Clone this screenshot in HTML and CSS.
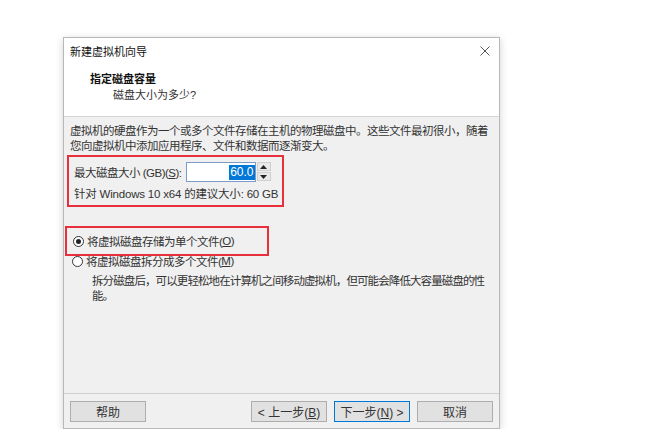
FILE: index.html
```html
<!DOCTYPE html>
<html lang="zh-CN">
<head>
  <meta charset="UTF-8">
  <title>新建虚拟机向导</title>
  <link rel="stylesheet" href="styles.css">
</head>
<body>
  <div class="dialog">
    <div class="header">
      <div class="titlebar">
        <span class="title">新建虚拟机向导</span>
        <svg class="close" width="10" height="10" viewBox="0 0 10 10">
          <path d="M0.5 0.5 L9.5 9.5 M9.5 0.5 L0.5 9.5" stroke="#555" stroke-width="1"/>
        </svg>
      </div>
      <div class="step-title">指定磁盘容量</div>
      <div class="step-sub">磁盘大小为多少?</div>
    </div>

    <div class="content">
      <p class="desc">虚拟机的硬盘作为一个或多个文件存储在主机的物理磁盘中。这些文件最初很小，随着<br>您向虚拟机中添加应用程序、文件和数据而逐渐变大。</p>

      <div class="mark size-box">
        <div class="size-row">
          <span>最大磁盘大小 (GB)(<u>S</u>):</span>
          <div class="spin">
            <div class="spin-input"><span class="sel">60.0</span></div>
            <div class="spin-btns">
              <div class="spin-btn">
                <svg width="7" height="4" viewBox="0 0 7 4"><path d="M0 4 L3.5 0 L7 4Z" fill="#222"/></svg>
              </div>
              <div class="spin-btn">
                <svg width="7" height="4" viewBox="0 0 7 4"><path d="M0 0 L3.5 4 L7 0Z" fill="#222"/></svg>
              </div>
            </div>
          </div>
        </div>
        <div class="hint">针对 Windows 10 x64 的建议大小: 60 GB</div>
      </div>

      <div class="mark radio-box">
        <label class="radio"><span class="dot checked"></span>将虚拟磁盘存储为单个文件(<u>O</u>)</label>
      </div>
      <label class="radio second"><span class="dot"></span>将虚拟磁盘拆分成多个文件(<u>M</u>)</label>
      <p class="note">拆分磁盘后，可以更轻松地在计算机之间移动虚拟机，但可能会降低大容量磁盘的性<br>能。</p>
    </div>

    <div class="footer">
      <button class="btn">帮助</button>
      <div class="nav">
        <button class="btn">&lt; 上一步(<u>B</u>)</button>
        <button class="btn primary">下一步(<u>N</u>) &gt;</button>
        <button class="btn">取消</button>
      </div>
    </div>
  </div>
</body>
</html>
```

FILE: styles.css
```css
body {
  margin: 0;
  background: #fff;
  font-family: "Liberation Sans", "Noto Sans CJK SC", sans-serif;
  font-size: 12px;
  color: #222;
}
.dialog {
  margin: 37px 0 0 63px;
  width: 435px;
  height: 390px;
  border: 1px solid #b8b8b8;
  background: #f0f0f0;
  box-shadow: 0 2px 8px rgba(0,0,0,0.18);
  display: flex;
  flex-direction: column;
}
.header {
  background: #fff;
  height: 78px;
  border-bottom: 1px solid #d6d6d6;
}
.titlebar {
  display: flex;
  justify-content: space-between;
  align-items: center;
  height: 26px;
  padding: 0 9px 0 6px;
}
.title {
  font-size: 11px;
  color: #111;
}
.step-title {
  margin: 7px 0 0 26px;
  font-weight: bold;
  font-size: 11px;
  line-height: 16px;
  color: #111;
}
.step-sub {
  margin-left: 49px;
  font-size: 11px;
  line-height: 16px;
  color: #333;
}
.content {
  flex: 1;
  padding: 7px 0 0 6px;
  white-space: nowrap;
  font-size: 11.5px;
  letter-spacing: -0.5px;
}
.desc {
  margin: 0;
  line-height: 15px;
  color: #333;
}
.mark {
  border: 2px solid #e8303c;
}
.size-box {
  width: 208px;
  height: 48px;
  margin: 1px 0 0 -3px;
  padding: 0 0 0 5px;
}
.size-row {
  display: flex;
  align-items: center;
  margin-top: 4px;
  height: 22px;
  color: #333;
}
.spin {
  display: flex;
  margin-left: 4px;
  letter-spacing: 0;
}
.spin-input {
  width: 68px;
  height: 18px;
  border: 1px solid #7a9cc6;
  background: #fff;
  display: flex;
  justify-content: flex-end;
  align-items: center;
}
.sel {
  background: #0078d7;
  color: #fff;
  font-size: 12px;
  line-height: 15px;
  padding: 0 1px;
}
.spin-btns {
  display: flex;
  flex-direction: column;
  margin-left: 1px;
}
.spin-btn {
  width: 14px;
  height: 9px;
  margin-bottom: 1px;
  background: #e8e8e8;
  border: 1px solid #cfcfcf;
  box-sizing: border-box;
  display: flex;
  justify-content: center;
  align-items: center;
}
.hint {
  margin-top: 2px;
  color: #333;
  letter-spacing: -0.2px;
}
.radio-box {
  width: 194px;
  height: 26px;
  margin: 19px 0 0 -5px;
  padding-left: 6px;
  display: flex;
  align-items: center;
}
.radio {
  display: flex;
  align-items: center;
  color: #333;
}
.second {
  margin: -3px 0 0 2px;
}
.dot {
  width: 11px;
  height: 11px;
  border: 1px solid #333;
  border-radius: 50%;
  background: #fff;
  box-sizing: border-box;
  margin-right: 3px;
  position: relative;
}
.dot.checked::after {
  content: "";
  position: absolute;
  left: 2px;
  top: 2px;
  width: 5px;
  height: 5px;
  border-radius: 50%;
  background: #222;
}
.note {
  margin: 5px 0 0 22px;
  line-height: 15px;
  letter-spacing: -0.9px;
  color: #333;
}
.footer {
  height: 34px;
  border-top: 1px solid #d0d0d0;
  display: flex;
  justify-content: space-between;
  align-items: center;
  padding: 0 6px;
}
.nav {
  display: flex;
  gap: 7px;
}
.btn {
  width: 76px;
  height: 21px;
  padding: 0;
  border: 1px solid #adadad;
  background: #e1e1e1;
  font-family: "Liberation Sans", "Noto Sans CJK SC", sans-serif;
  font-size: 12px;
  color: #333;
}
.btn.primary {
  border-color: #0078d7;
}
```
